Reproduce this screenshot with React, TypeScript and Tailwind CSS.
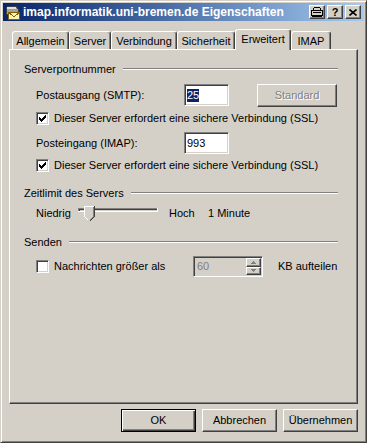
import React from 'react';

const raised =
  'border border-t-white border-l-white border-b-[#404040] border-r-[#404040] shadow-[inset_-1px_-1px_#808080]';
const sunken =
  'border border-t-[#808080] border-l-[#808080] border-b-white border-r-white shadow-[inset_1px_1px_#404040,inset_-1px_-1px_#D4D0C8]';

const CheckMark = () => (
  <svg width="7" height="7" viewBox="0 0 7 7" shapeRendering="crispEdges">
    <rect x="6" y="0" width="1" height="1" fill="#000" />
    <rect x="5" y="1" width="2" height="1" fill="#000" />
    <rect x="0" y="2" width="1" height="1" fill="#000" />
    <rect x="4" y="2" width="3" height="1" fill="#000" />
    <rect x="0" y="3" width="2" height="1" fill="#000" />
    <rect x="3" y="3" width="3" height="1" fill="#000" />
    <rect x="0" y="4" width="5" height="1" fill="#000" />
    <rect x="1" y="5" width="3" height="1" fill="#000" />
    <rect x="2" y="6" width="1" height="1" fill="#000" />
  </svg>
);

const Checkbox = ({ checked }: { checked?: boolean }) => (
  <div className={`w-[13px] h-[13px] shrink-0 bg-white flex items-center justify-center ${sunken}`}>
    {checked && <CheckMark />}
  </div>
);

const GroupHeading = ({ label }: { label: string }) => (
  <div className="flex items-center h-[14px]">
    <span className="whitespace-nowrap">{label}</span>
    <div className="flex-1 ml-[7px] h-[2px] border-t border-t-[#808080] border-b border-b-white" />
  </div>
);

const WinIcon = () => (
  <svg width="16" height="16" viewBox="0 0 16 16" shapeRendering="crispEdges">
    <path d="M2 5 L4 2 L12 2 L14 5 L14 10 L2 10 Z" fill="#A0A0A0" stroke="#404040" strokeWidth="1" />
    <rect x="3" y="3" width="9" height="2" fill="#E0E0E0" />
    <rect x="4.5" y="8.5" width="11" height="7" fill="#FFF4B0" stroke="#806000" strokeWidth="1" />
    <path d="M4.5 8.5 L10 12.5 L15.5 8.5" fill="none" stroke="#806000" strokeWidth="1" />
  </svg>
);

const CaptionButton = ({ children }: { children: React.ReactNode }) => (
  <div className="w-[16px] h-[14px] bg-[#D4D0C8] flex items-center justify-center border border-t-white border-l-white border-b-[#404040] border-r-[#404040] shadow-[inset_-1px_-1px_#808080]">
    {children}
  </div>
);

const Slider = () => (
  <svg width="80" height="22" viewBox="0 0 80 22" shapeRendering="crispEdges">
    <rect x="0" y="6" width="80" height="1" fill="#808080" />
    <rect x="0" y="6" width="1" height="4" fill="#808080" />
    <rect x="1" y="7" width="78" height="1" fill="#404040" />
    <rect x="1" y="7" width="1" height="2" fill="#404040" />
    <rect x="2" y="8" width="77" height="1" fill="#D4D0C8" />
    <rect x="0" y="9" width="80" height="1" fill="#FFFFFF" />
    <rect x="79" y="6" width="1" height="4" fill="#FFFFFF" />
    <polygon points="6,4 16,4 16,14 11,19 6,14" fill="#D4D0C8" />
    <rect x="6" y="4" width="10" height="1" fill="#FFFFFF" />
    <rect x="6" y="4" width="1" height="11" fill="#FFFFFF" />
    <rect x="16" y="4" width="1" height="11" fill="#404040" />
    <rect x="15" y="5" width="1" height="10" fill="#808080" />
    <path d="M16.5 14.5 L11.5 19.5" stroke="#404040" strokeWidth="1" />
    <path d="M15.5 14.5 L11.5 18.5" stroke="#808080" strokeWidth="1" />
    <path d="M6.5 14.5 L10.5 18.5" stroke="#FFFFFF" strokeWidth="1" />
  </svg>
);

const Button = ({ label, isDefault, disabled, w = 'w-[75px]' }: { label: string; isDefault?: boolean; disabled?: boolean; w?: string }) => (
  <div
    className={`${w} h-[23px] bg-[#D4D0C8] flex items-center justify-center ${
      isDefault
        ? 'border border-black shadow-[inset_1px_1px_#fff,inset_-1px_-1px_#404040,inset_-2px_-2px_#808080]'
        : raised
    } ${disabled ? 'text-[#808080] [text-shadow:1px_1px_#fff]' : ''}`}
  >
    {label}
  </div>
);

const tabs = [
  { label: 'Allgemein', w: 'w-[57px]' },
  { label: 'Server', w: 'w-[42px]' },
  { label: 'Verbindung', w: 'w-[66px]' },
  { label: 'Sicherheit', w: 'w-[58px]' },
  { label: 'Erweitert', w: 'w-[56px]', active: true },
  { label: 'IMAP', w: 'w-[40px]' },
];

export default function App() {
  return (
    <div className="w-[367px] h-[443px] bg-[#D4D0C8] border border-t-[#D4D0C8] border-l-[#D4D0C8] border-b-[#404040] border-r-[#404040] shadow-[inset_1px_1px_#fff,inset_-1px_-1px_#808080] p-[2px] flex flex-col font-['Liberation_Sans',Arial,sans-serif] text-[11px] leading-[13px] text-black select-none">
      {/* title bar */}
      <div className="h-[18px] shrink-0 flex items-center bg-linear-to-r from-[#0A246A] to-[#A6CAF0] pl-[1px] pr-[3px]">
        <WinIcon />
        <span className="ml-[3px] text-white font-bold text-[12px] whitespace-nowrap">imap.informatik.uni-bremen.de Eigenschaften</span>
        <div className="ml-auto flex items-center">
          <CaptionButton>
            <svg width="12" height="10" viewBox="0 0 12 10" shapeRendering="crispEdges">
              <path d="M3.5 0.5 H8.5 L9.5 1.5 V3.5 H2.5 V1.5 Z" fill="none" stroke="#000" />
              <rect x="0.5" y="3.5" width="11" height="5" fill="none" stroke="#000" />
              <rect x="2" y="5" width="8" height="1" fill="#000" />
              <rect x="1" y="9" width="10" height="1" fill="#000" />
            </svg>
          </CaptionButton>
          <div className="w-[2px]" />
          <CaptionButton>
            <span className="font-bold text-[11px] leading-[11px]">?</span>
          </CaptionButton>
          <div className="w-[2px]" />
          <CaptionButton>
            <svg width="8" height="7" viewBox="0 0 8 7">
              <path d="M0.5 0.5 L7.5 6.5 M7.5 0.5 L0.5 6.5" stroke="#000" strokeWidth="1.6" />
            </svg>
          </CaptionButton>
        </div>
      </div>

      <div className="flex flex-col px-[6px] pt-[8px]">
        {/* tabs */}
        <div className="h-[20px] flex items-end pl-[3px]">
          {tabs.map((t) =>
            t.active ? (
              <div
                key={t.label}
                className={`${t.w} h-[21px] -mb-[1px] relative z-10 bg-[#D4D0C8] rounded-t-[3px] border-t border-l border-t-white border-l-white border-r border-r-[#404040] shadow-[inset_-1px_0_#808080] flex justify-center pt-[3px]`}
              >
                {t.label}
              </div>
            ) : (
              <div
                key={t.label}
                className={`${t.w} h-[18px] rounded-t-[3px] border-t border-l border-t-white border-l-white border-r border-r-[#404040] shadow-[inset_-1px_0_#808080] flex justify-center pt-[3px]`}
              >
                {t.label}
              </div>
            )
          )}
        </div>

        {/* panel */}
        <div className={`h-[355px] bg-[#D4D0C8] ${raised} pl-[14px] pr-[19px] pt-[12px] flex flex-col`}>
          <GroupHeading label="Serverportnummer" />
          <div className="mt-[8px] h-[22px] flex items-center pl-[12px]">
            <span className="w-[148px]">Postausgang (SMTP):</span>
            <div className={`w-[45px] h-[22px] bg-white ${sunken} flex items-center pl-[2px]`}>
              <span className="bg-[#0A246A] text-white">25</span>
            </div>
            <div className="ml-[28px]">
              <Button label="Standard" disabled w="w-[80px]" />
            </div>
          </div>
          <div className="mt-[6px] h-[13px] flex items-center gap-[5px] pl-[12px]">
            <Checkbox checked />
            <span>Dieser Server erfordert eine sichere Verbindung (SSL)</span>
          </div>
          <div className="mt-[7px] h-[22px] flex items-center pl-[12px]">
            <span className="w-[148px]">Posteingang (IMAP):</span>
            <div className={`w-[45px] h-[22px] bg-white ${sunken} flex items-center pl-[2px]`}>
              <span>993</span>
            </div>
          </div>
          <div className="mt-[5px] h-[13px] flex items-center gap-[5px] pl-[12px]">
            <Checkbox checked />
            <span>Dieser Server erfordert eine sichere Verbindung (SSL)</span>
          </div>

          <div className="mt-[14px]">
            <GroupHeading label="Zeitlimit des Servers" />
          </div>
          <div className="mt-[2px] h-[22px] flex items-center pl-[12px]">
            <span className="w-[42px]">Niedrig</span>
            <Slider />
            <span className="ml-[11px] w-[39px]">Hoch</span>
            <span>1 Minute</span>
          </div>

          <div className="mt-[11px]">
            <GroupHeading label="Senden" />
          </div>
          <div className="mt-[7px] h-[21px] flex items-center pl-[12px]">
            <Checkbox />
            <span className="ml-[5px] w-[139px]">Nachrichten größer als</span>
            <div className={`w-[70px] h-[21px] bg-[#D4D0C8] ${sunken} flex items-stretch p-[1px]`}>
              <span className="flex-1 flex items-center pl-[2px] text-[#808080]">60</span>
              <div className="w-[15px] flex flex-col">
                <div className={`flex-1 ${raised} flex items-center justify-center`}>
                  <svg width="5" height="3" viewBox="0 0 5 3" shapeRendering="crispEdges">
                    <path d="M2 0 H3 V1 H4 V2 H5 V3 H0 V2 H1 V1 H2 Z" fill="#808080" />
                  </svg>
                </div>
                <div className={`flex-1 ${raised} flex items-center justify-center`}>
                  <svg width="5" height="3" viewBox="0 0 5 3" shapeRendering="crispEdges">
                    <path d="M0 0 H5 V1 H4 V2 H3 V3 H2 V2 H1 V1 H0 Z" fill="#808080" />
                  </svg>
                </div>
              </div>
            </div>
            <span className="ml-[15px]">KB aufteilen</span>
          </div>
        </div>

        {/* dialog buttons */}
        <div className="mt-[5px] flex justify-end gap-[6px]">
          <Button label="OK" isDefault />
          <Button label="Abbrechen" />
          <Button label="Übernehmen" />
        </div>
      </div>
    </div>
  );
}
